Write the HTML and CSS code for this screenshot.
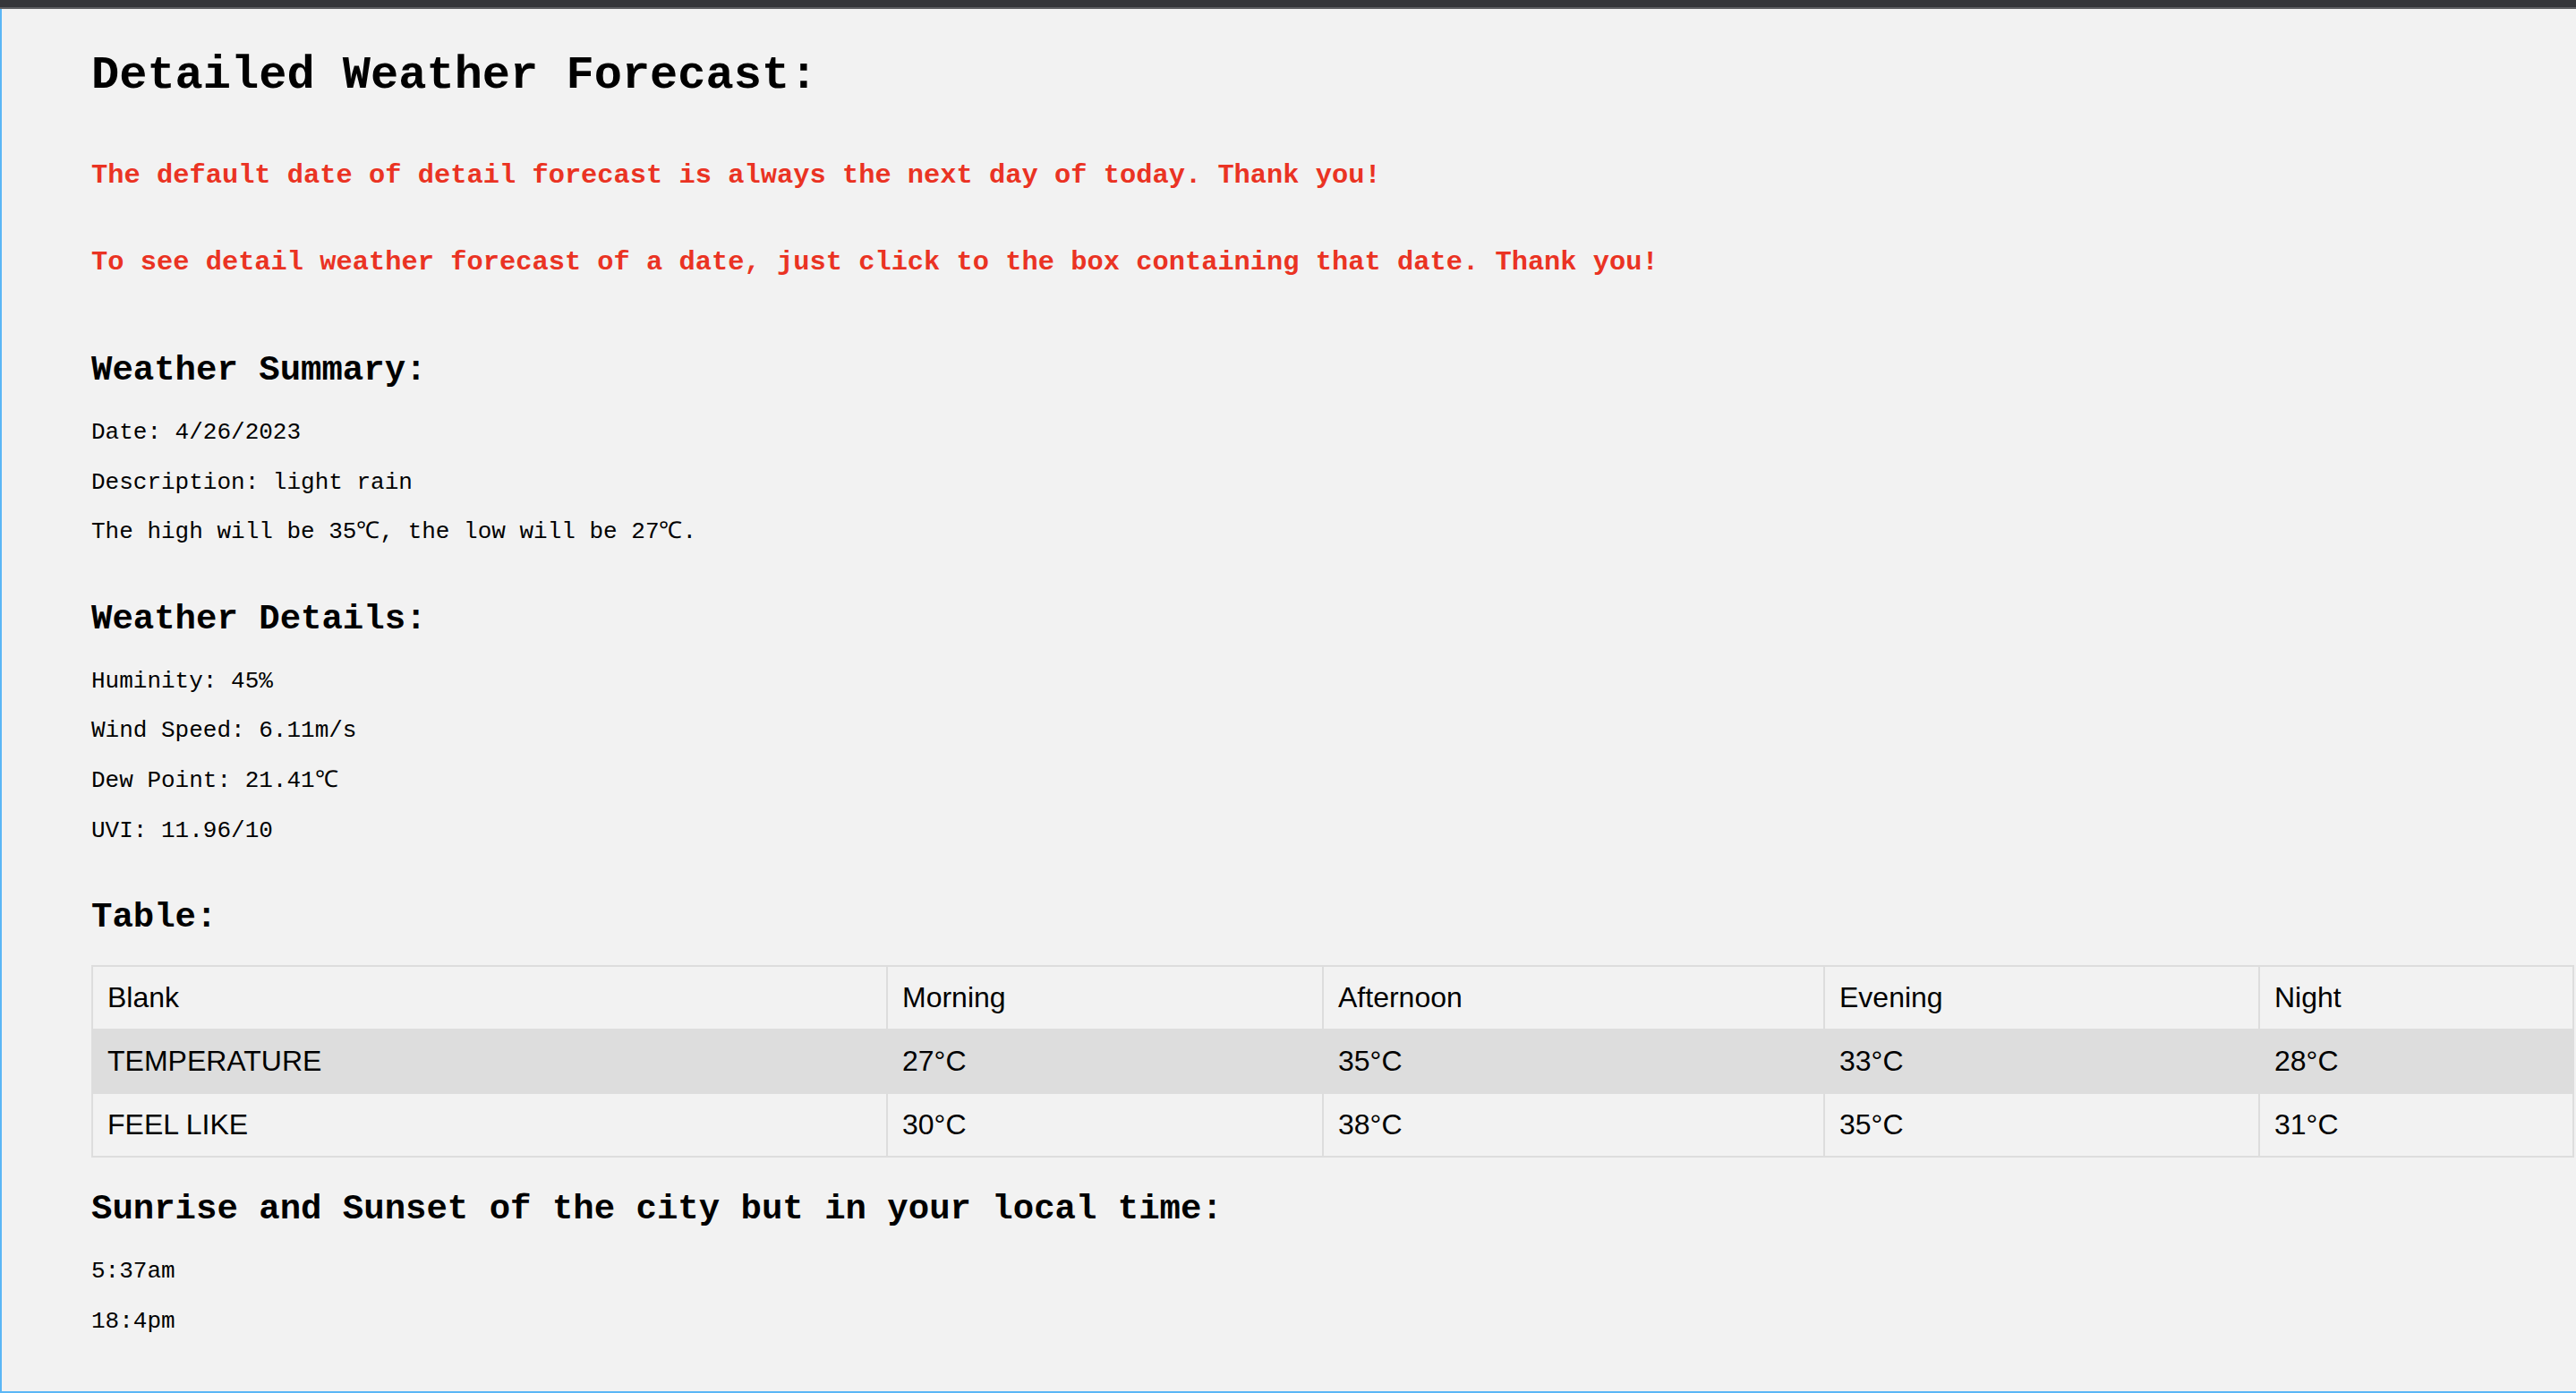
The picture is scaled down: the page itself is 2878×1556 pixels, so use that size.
FILE: index.html
```html
<!DOCTYPE html>
<html lang="en">
<head>
<meta charset="utf-8">
<title>Detailed Weather Forecast</title>
<link rel="stylesheet" href="styles.css">
</head>
<body>
<div class="topbar"></div>
<div class="frame">
  <main class="page">
    <h1 class="title">Detailed Weather Forecast:</h1>
    <h3 class="notice notice-first">The default date of detail forecast is always the next day of today. Thank you!</h3>
    <h3 class="notice">To see detail weather forecast of a date, just click to the box containing that date. Thank you!</h3>

    <h2 class="section section-first">Weather Summary:</h2>
    <p class="line line-first">Date: 4/26/2023</p>
    <p class="line">Description: light rain</p>
    <p class="line">The high will be 35℃, the low will be 27℃.</p>

    <h2 class="section">Weather Details:</h2>
    <p class="line line-first">Huminity: 45%</p>
    <p class="line">Wind Speed: 6.11m/s</p>
    <p class="line">Dew Point: 21.41℃</p>
    <p class="line">UVI: 11.96/10</p>

    <h2 class="section">Table:</h2>
    <table class="forecast">
      <colgroup>
        <col class="c1"><col class="c2"><col class="c3"><col class="c4"><col class="c5">
      </colgroup>
      <tr><td>Blank</td><td>Morning</td><td>Afternoon</td><td>Evening</td><td>Night</td></tr>
      <tr><td>TEMPERATURE</td><td>27°C</td><td>35°C</td><td>33°C</td><td>28°C</td></tr>
      <tr><td>FEEL LIKE</td><td>30°C</td><td>38°C</td><td>35°C</td><td>31°C</td></tr>
    </table>

    <h2 class="section section-after-table">Sunrise and Sunset of the city but in your local time:</h2>
    <p class="line line-first">5:37am</p>
    <p class="line">18:4pm</p>
  </main>
</div>
</body>
</html>
```
FILE: styles.css
```css
html, body {
  margin: 0;
  padding: 0;
}
body {
  background: #f2f2f2;
  font-family: "Liberation Mono", "Courier New", monospace;
  color: #000;
  overflow: hidden;
}
.topbar {
  height: 8px;
  background: #35363a;
  border-bottom: 2px solid #5d5e62;
}
.frame {
  height: 1546px;
  box-sizing: border-box;
  border-left: 2px solid #5bb6f6;
  border-bottom: 2px solid #5bb6f6;
  background: #f2f2f2;
  overflow: hidden;
}
.page {
  display: flex;
  flex-direction: column;
  align-items: flex-start;
  padding-left: 100px;
}
.page h1, .page h2, .page h3, .page p {
  margin: 0;
  white-space: nowrap;
}
.title {
  font-size: 52px;
  line-height: 58.9px;
  font-weight: bold;
  margin-top: 45.5px !important;
}
.notice {
  font-size: 30.4px;
  line-height: 34.45px;
  font-weight: bold;
  color: #ea3323;
  margin-top: 62.7px !important;
}
.notice-first {
  margin-top: 64.6px !important;
}
.section {
  font-size: 39px;
  line-height: 44.2px;
  font-weight: bold;
  margin-top: 60.2px !important;
}
.section-first {
  margin-top: 81.6px !important;
}
.section-after-table {
  margin-top: 36.7px !important;
}
.line {
  font-size: 26px;
  line-height: 29.47px;
  font-weight: normal;
  margin-top: 26.2px !important;
}
.line-first {
  margin-top: 32.5px !important;
}
.forecast {
  margin-top: 30.3px;
  margin-left: 0;
  width: 2774px;
  table-layout: fixed;
  border-collapse: collapse;
  font-family: "Liberation Sans", Arial, sans-serif;
  font-size: 32px;
}
.forecast td {
  border: 2px solid #dddddd;
  padding: 16px;
  text-align: left;
  line-height: normal;
}
.forecast tr:nth-child(even) {
  background: #dddddd;
}
.c1 { width: 888px; }
.c2 { width: 487px; }
.c3 { width: 560px; }
.c4 { width: 486px; }
.c5 { width: 351px; }
```
